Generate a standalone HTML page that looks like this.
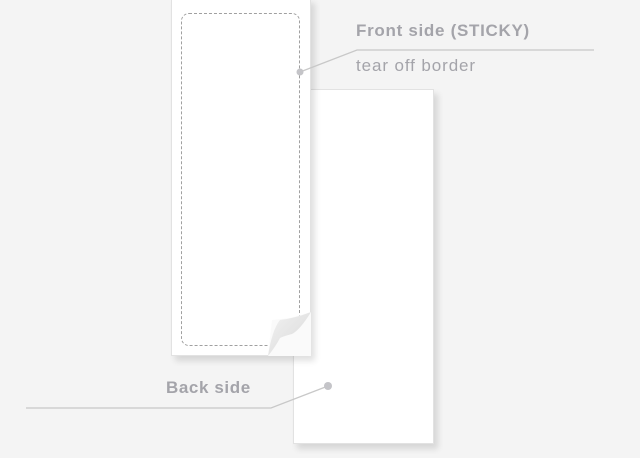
<html><head><style>
body{margin:0;width:640px;height:458px;background:#f4f4f4;position:relative;overflow:hidden;font-family:"Liberation Sans",sans-serif}
.c{position:absolute;background:#fff;border:1px solid #e2e2e2;box-sizing:border-box;box-shadow:4px 5px 6px rgba(0,0,0,.12)}
.t{position:absolute;color:#a4a4aa;white-space:nowrap}
</style></head><body>
<div class="c" style="left:293px;top:89px;width:141px;height:355px"></div>
<div class="c" style="left:171px;top:-2px;width:140px;height:358px"></div>
<div style="position:absolute;left:181px;top:13px;width:119px;height:333px;border:1.5px dashed #a0a0a0;border-radius:8px;box-sizing:border-box"></div>
<svg style="position:absolute;left:0;top:0" width="640" height="458">
<defs><linearGradient id="g" x1="0" y1="0" x2="1" y2="1"><stop offset="0" stop-color="#f2f2f2"/><stop offset="1" stop-color="#d8d8d8"/></linearGradient></defs>
<path d="M268 356 L272 320 L290 318 L311 312 L311 356 Z" fill="#fafafa"/>
<path d="M268 356 Q272 330 280 320 Q296 318 311 312 Q300 330 292 334 Q284 336 280 338 Q276 346 268 356Z" fill="url(#g)"/>
<polyline points="300,72 357,50 594,50" fill="none" stroke="#c8c8c8" stroke-width="1.3"/>
<circle cx="300" cy="72" r="3.5" fill="#c4c4c8"/>
<polyline points="328,386 271,408 26,408" fill="none" stroke="#c8c8c8" stroke-width="1.3"/>
<circle cx="328" cy="386" r="4" fill="#c4c4c8"/>
</svg>
<div class="t" style="left:356px;top:21px;font-size:17px;font-weight:bold;letter-spacing:0.7px">Front side (STICKY)</div>
<div class="t" style="left:356px;top:56px;font-size:17px;letter-spacing:0.9px">tear off border</div>
<div class="t" style="left:166px;top:378px;font-size:17px;font-weight:bold;letter-spacing:0.6px">Back side</div>
</body></html>
